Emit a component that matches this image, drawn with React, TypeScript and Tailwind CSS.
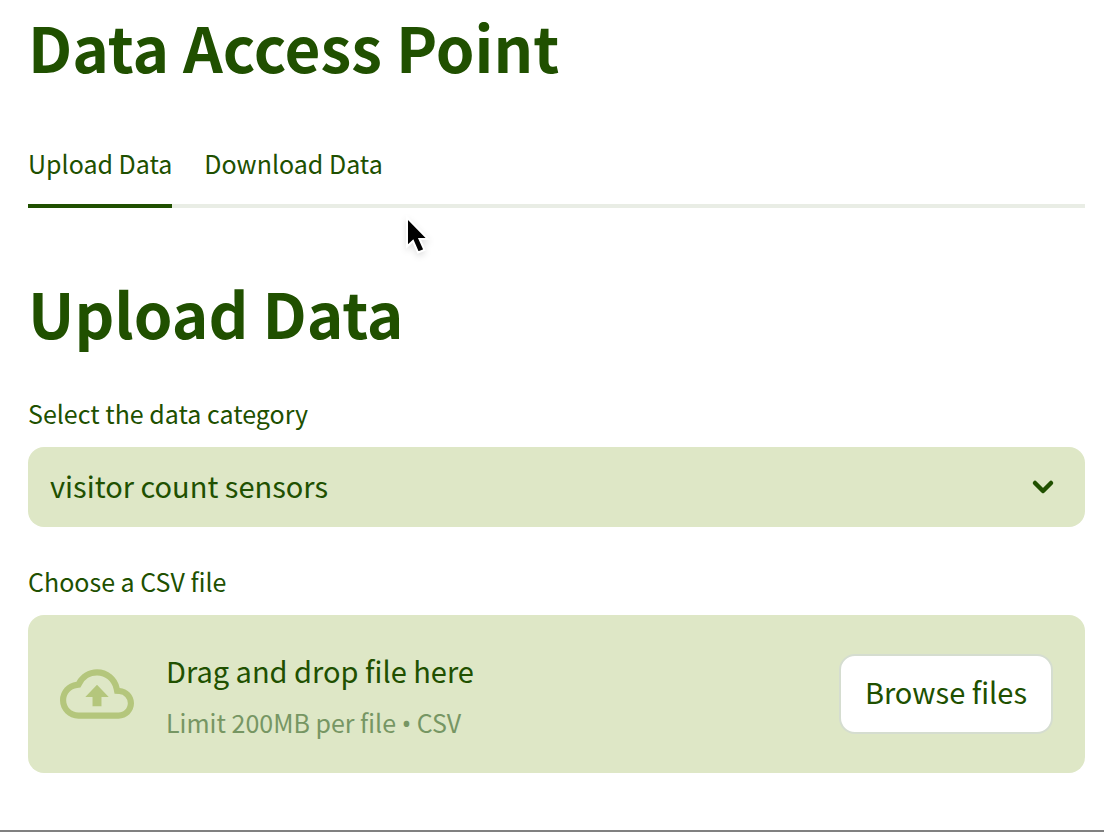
import { useId, useRef, useState } from 'react';

function Cursor() {
  return (
    <svg
      className="pointer-events-none absolute left-[402px] top-[214px] h-[44px] w-[30px] drop-shadow-md"
      viewBox="0 0 30 44"
      aria-hidden="true"
    >
      <path
        d="M5 3.500v29l6-5.500 5 11.500 6.500-2.500-5-11H26z"
        fill="#000"
        stroke="#fff"
        strokeWidth="2"
        strokeLinejoin="miter"
      />
    </svg>
  );
}

function CloudUpload() {
  return (
    <svg className="size-[74px] shrink-0 text-[#b4c67c]" viewBox="0 0 24 24" fill="currentColor" aria-hidden="true">
      <path d="M19.35 10.04A7.49 7.49 0 0 0 12 4C9.11 4 6.6 5.64 5.35 8.04A5.994 5.994 0 0 0 0 14c0 3.31 2.69 6 6 6h13c2.76 0 5-2.24 5-5 0-2.64-2.05-4.78-4.65-4.96zM19 18H6c-2.21 0-4-1.790-4-4 0-2.050 1.530-3.760 3.560-3.970l1.070-.11.5-.95A5.469 5.469 0 0 1 12 6c2.620 0 4.880 1.860 5.390 4.430l.3 1.500 1.530.11A2.980 2.980 0 0 1 22 15c0 1.650-1.350 3-3 3zM8.200 13h2.350v3h2.900v-3h2.350L12 9z" />
    </svg>
  );
}

function Chevron() {
  return (
    <svg
      className="pointer-events-none absolute right-[30px] top-[31px] h-[18px] w-6"
      viewBox="0 0 24 18"
      fill="none"
      stroke="currentColor"
      strokeWidth="4.5"
      strokeLinecap="round"
      strokeLinejoin="round"
      aria-hidden="true"
    >
      <path d="M4 5l8 8 8-8" />
    </svg>
  );
}

const tabs = [
  { id: 'upload', label: 'Upload Data' },
  { id: 'download', label: 'Download Data' },
];

export default function App() {
  const [tab, setTab] = useState('upload');
  const selectId = useId();
  const fileId = useId();
  const fileRef = useRef<HTMLInputElement>(null);

  return (
    <div className="relative flex min-h-screen flex-col border-b-2 border-[#808080] bg-white font-['Noto_Sans_CJK_SC','Noto_Sans',sans-serif] text-[#205000]">
      <main className="flex flex-col pl-7 pr-[19px] pt-1">
        <h1 className="text-[62px] font-semibold leading-[84px]">Data Access Point</h1>
        <div role="tablist" className="mt-9 flex h-[84px] gap-8 border-b-4 border-[#e9ede5]">
          {tabs.map((t) => (
            <button
              key={t.id}
              role="tab"
              aria-selected={tab === t.id}
              onClick={() => setTab(t.id)}
              className={`-mb-1 border-b-4 text-[25px] ${tab === t.id ? 'border-[#205000]' : 'border-transparent'}`}
            >
              {t.label}
            </button>
          ))}
        </div>
        <h2 className="mt-[62px] text-[62px] font-semibold leading-[84px]">Upload Data</h2>
        <label htmlFor={selectId} className="mt-[43px] text-[25px] leading-8">
          Select the data category
        </label>
        <div className="relative mt-[18px]">
          <select
            id={selectId}
            className="block h-20 w-full appearance-none rounded-2xl bg-[#dee7c6] px-[22px] pb-[2px] text-[29px]"
          >
            <option>visitor count sensors</option>
          </select>
          <Chevron />
        </div>
        <label htmlFor={fileId} className="mt-[38px] text-[25px] leading-8">
          Choose a CSV file
        </label>
        <div className="mt-[18px] flex items-center gap-8 rounded-2xl bg-[#dee7c6] px-8 py-[30px]">
          <CloudUpload />
          <div className="flex flex-col gap-[6px]">
            <span className="text-[29px] leading-[50px]">Drag and drop file here</span>
            <span className="text-[25px] leading-[42px] text-[#769663]">
              Limit 200MB per file <span className="font-['Noto_Sans',sans-serif] leading-none">•</span> CSV
            </span>
          </div>
          <button
            onClick={() => fileRef.current?.click()}
            className="ml-auto h-20 rounded-2xl border-2 border-[#d5ddd0] bg-white px-6 pb-1 text-[29px]"
          >
            Browse files
          </button>
          <input ref={fileRef} id={fileId} type="file" accept=".csv" className="sr-only" />
        </div>
      </main>
      <Cursor />
    </div>
  );
}
